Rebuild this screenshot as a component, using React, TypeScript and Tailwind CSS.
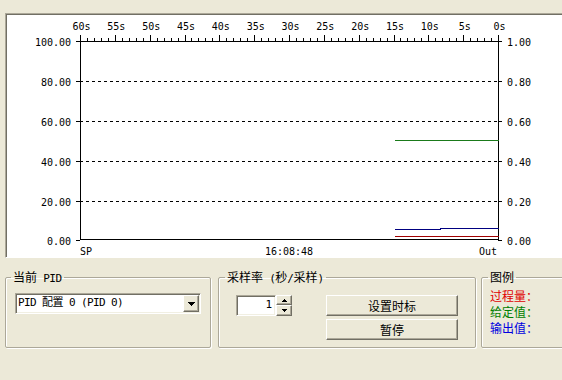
import React from "react";

const CJK = '"Noto Sans CJK SC", "Noto Sans", sans-serif';
const MONO = '"DejaVu Sans Mono", "Liberation Mono", "Noto Sans CJK SC", monospace';

// plot geometry (page coordinates)
const X0 = 80;
const X1 = 498;
const Y0 = 41;
const Y1 = 240;

function Chart() {
  const ticks = [];
  for (let s = 0; s <= 60; s++) {
    const x = Math.round(X1 - (s * (X1 - X0)) / 60) + 0.5;
    const major = s % 5 === 0;
    ticks.push(
      <line key={s} x1={x} x2={x} y1={major ? 35 : 38} y2={Y0} stroke="#000" />
    );
  }
  const labels = [];
  for (let s = 0; s <= 60; s += 5) {
    const x = X1 - (s * (X1 - X0)) / 60 + 1.5;
    labels.push(
      <text key={s} x={x} y={30} textAnchor="middle">
        {s}s
      </text>
    );
  }
  const rows = [100, 80, 60, 40, 20, 0];
  return (
    <svg
      width={556}
      height={243}
      viewBox="6 14 556 243"
      className="block"
      shapeRendering="crispEdges"
      style={{ fontFamily: MONO, fontSize: 10 }}
    >
      {ticks}
      {labels}
      {rows.map((v, i) => {
        const y = Y0 + i * 40 - (i === 5 ? 1 : 0) + 0.5;
        return (
          <g key={v}>
            <line x1={76} x2={X0} y1={y} y2={y} stroke="#000" />
            <line x1={X1} x2={502} y1={y} y2={y} stroke="#000" />
            {v !== 100 && v !== 0 && (
              <line x1={X0} x2={X1} y1={y} y2={y} stroke="#000" strokeDasharray="3 3" />
            )}
            <text x={71} y={y + 4} textAnchor="end">
              {v.toFixed(2)}
            </text>
            <text x={507} y={y + 4}>
              {(v / 100).toFixed(2)}
            </text>
          </g>
        );
      })}
      <line x1={X0} x2={X1} y1={Y0 + 0.5} y2={Y0 + 0.5} stroke="#000" />
      <line x1={X0} x2={X1 + 1} y1={Y1 - 0.5} y2={Y1 - 0.5} stroke="#000" />
      <line x1={X0 + 0.5} x2={X0 + 0.5} y1={Y0} y2={Y1} stroke="#000" />
      <line x1={X1 + 0.5} x2={X1 + 0.5} y1={Y0} y2={Y1} stroke="#000" />

      <line x1={395} x2={499} y1={140.5} y2={140.5} stroke="#1a7a1a" />
      <polyline
        points="395,229.5 440,229.5 440,228.5 499,228.5"
        fill="none"
        stroke="#000080"
      />
      <line x1={395} x2={499} y1={236.5} y2={236.5} stroke="#a00000" />

      <text x={80} y={255}>SP</text>
      <text x={289} y={255} textAnchor="middle">
        16:08:48
      </text>
      <text x={497} y={255} textAnchor="end">
        Out
      </text>
    </svg>
  );
}

const raised =
  "border border-t-white border-l-white border-b-[#716f64] border-r-[#716f64] shadow-[inset_-1px_-1px_0_#aca899] bg-[#ece9d8]";
const sunken =
  "border border-t-[#aca899] border-l-[#aca899] border-b-white border-r-white shadow-[inset_1px_1px_0_#716f64,inset_-1px_-1px_0_#f1efe2] bg-white";

function M({ children }: { children: React.ReactNode }) {
  return (
    <span className="text-[11px] leading-[12px] tracking-[-0.5px]" style={{ fontFamily: MONO }}>
      {children}
    </span>
  );
}

function Group({
  title,
  className,
  legendClass,
  children,
}: {
  title: React.ReactNode;
  className?: string;
  legendClass?: string;
  children?: React.ReactNode;
}) {
  return (
    <fieldset
      className={`h-[77px] shrink-0 rounded-[2px] border border-[#aca899] shadow-[inset_1px_1px_0_#fff,1px_1px_0_#fff] ${className ?? ""}`}
    >
      <legend
        className={`h-[12px] overflow-visible whitespace-nowrap px-[2px] text-[12px] leading-[12px] text-black ${legendClass ?? ""}`}
      >
        {title}
      </legend>
      {children}
    </fieldset>
  );
}

function Tri({ up, small }: { up?: boolean; small?: boolean }) {
  const w = small ? 5 : 7;
  const h = small ? 3 : 4;
  return (
    <svg width={w} height={h} viewBox={`0 0 ${w} ${h}`} shapeRendering="crispEdges">
      <polygon
        points={up ? `0,${h} ${w},${h} ${w / 2},0` : `0,0 ${w},0 ${w / 2},${h}`}
        fill="#000"
      />
    </svg>
  );
}

export default function App() {
  return (
    <div
      className="flex h-[380px] w-[562px] flex-col overflow-hidden bg-[#ece9d8]"
      style={{ fontFamily: CJK }}
    >
      <div className="h-[13px] shrink-0" />
      <div className="ml-[5px] h-[245px] shrink-0 border-b border-l border-t border-b-white border-l-[#aca899] border-t-[#aca899] bg-white shadow-[inset_1px_1px_0_#716f64]">
        <Chart />
      </div>

      <div className="mt-[13px] flex">
        <Group
          title={
            <>
              当前<M> PID</M>
            </>
          }
          className="ml-[5px] w-[206px]"
          legendClass="ml-[5px]"
        >
          <div className={`ml-[9px] mt-[10px] flex h-[21px] w-[186px] items-center ${sunken}`}>
            <span
              className="flex-1 pl-[2px] text-[11px] tracking-[-0.6px] text-black"
              style={{ fontFamily: MONO }}
            >
              PID 配置 0 (PID 0)
            </span>
            <span className={`mr-[1px] flex h-[17px] w-[16px] items-center justify-center ${raised}`}>
              <Tri />
            </span>
          </div>
        </Group>

        <Group
          title={
            <>
              采样率<M> (</M>秒<M>/</M>采样<M>)</M>
            </>
          }
          className="ml-[7px] w-[258px]"
          legendClass="ml-[6px]"
        >
          <div className="mt-[12px] flex items-start">
            <div className="ml-[17px] flex h-[21px] w-[56px]">
              <div
                className={`flex h-full flex-1 items-center justify-end pr-[3px] text-[11px] ${sunken}`}
                style={{ fontFamily: MONO }}
              >
                1
              </div>
              <div className="flex h-full w-[16px] flex-col">
                <span className={`flex h-[10px] items-center justify-center ${raised}`}>
                  <Tri up small />
                </span>
                <span className={`flex h-[11px] items-center justify-center ${raised}`}>
                  <Tri small />
                </span>
              </div>
            </div>
            <div className="ml-[34px] flex flex-col gap-[3px]">
              <button
                className={`flex h-[21px] w-[132px] items-center justify-center text-[12px] text-black ${raised}`}
              >
                设置时标
              </button>
              <button
                className={`flex h-[21px] w-[132px] items-center justify-center text-[12px] text-black ${raised}`}
              >
                暂停
              </button>
            </div>
          </div>
        </Group>

        <Group title="图例" className="ml-[5px] w-[90px]" legendClass="ml-[6px]">
          <div className="mt-[5px] flex flex-col pl-[8px] text-[12px] leading-[16px]">
            <span className="text-[#e00000]">过程量：</span>
            <span className="text-[#008000]">给定值：</span>
            <span className="text-[#0000e0]">输出值：</span>
          </div>
        </Group>
      </div>
    </div>
  );
}
